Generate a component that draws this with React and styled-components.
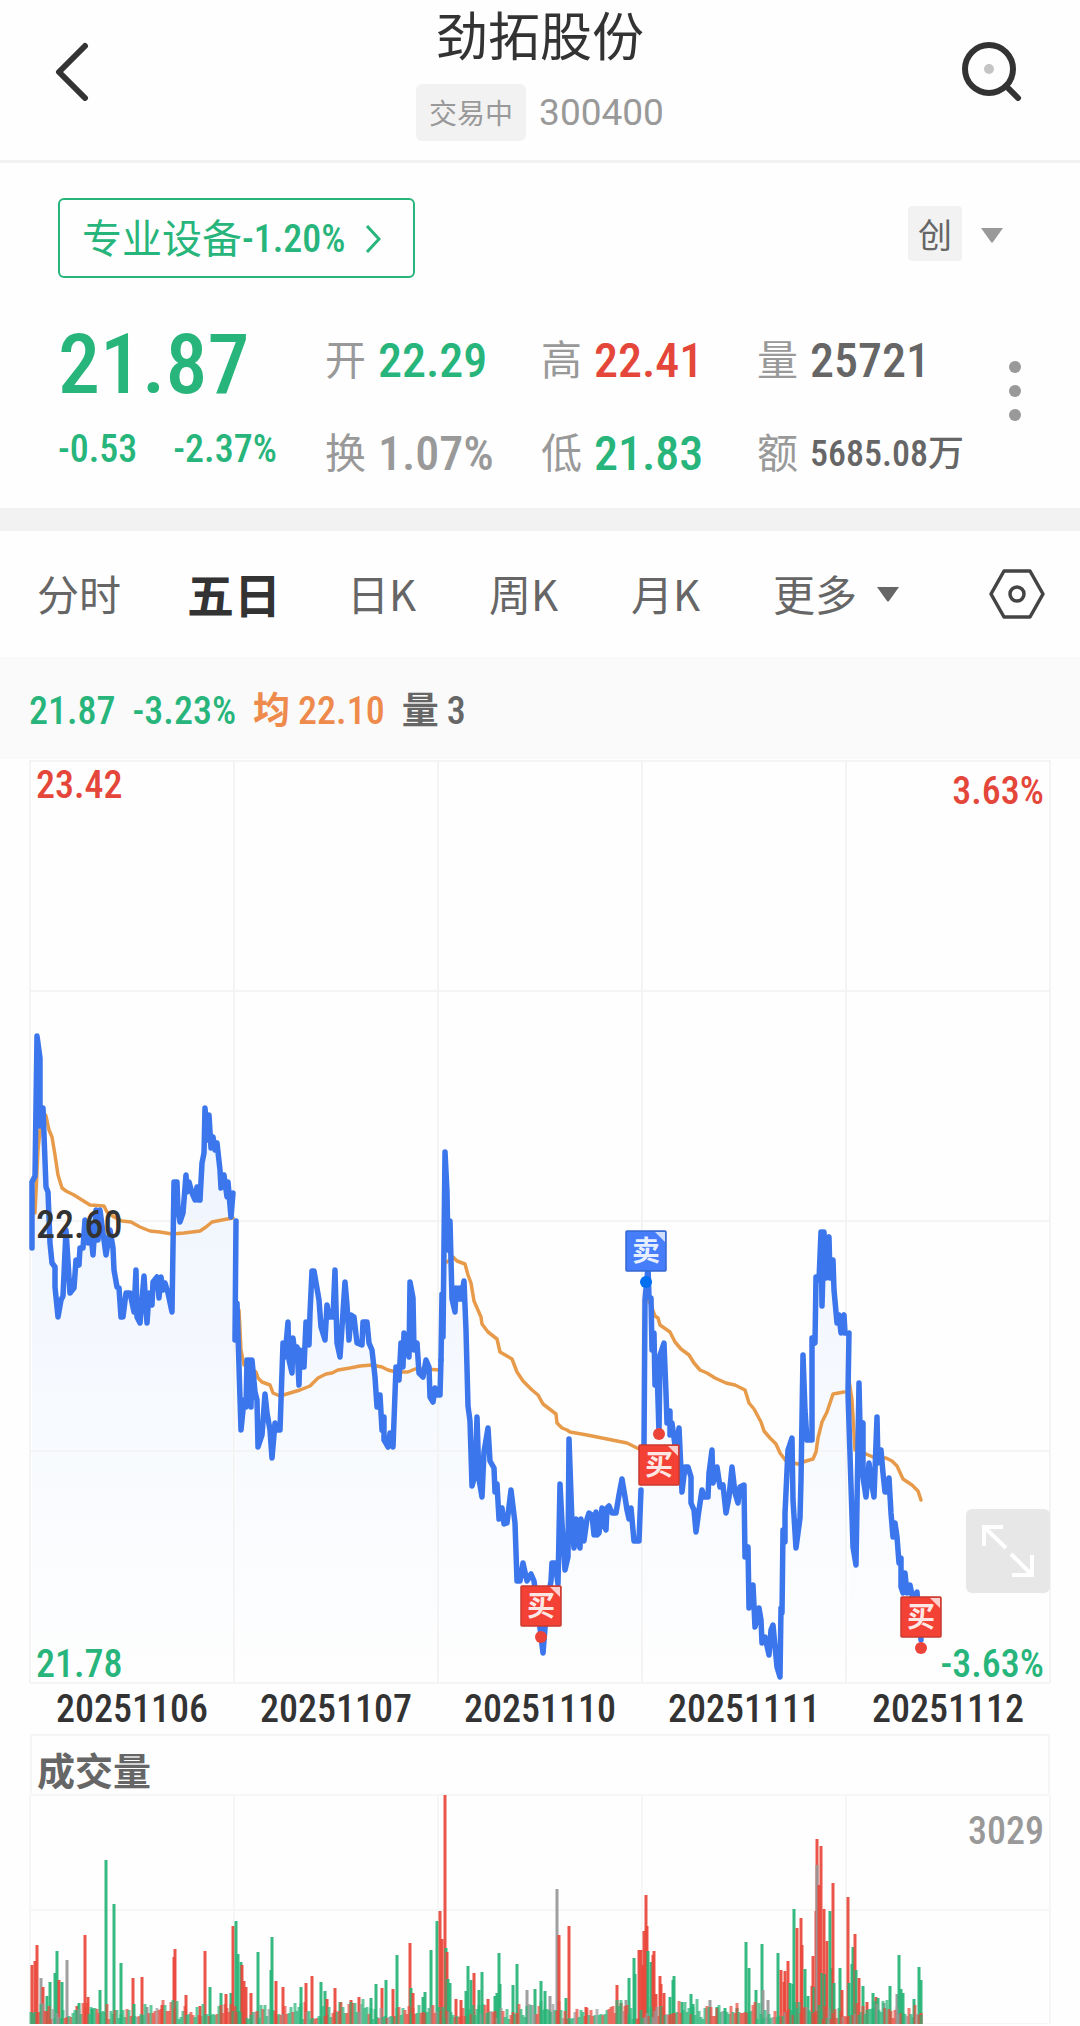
import React from "react";
import styled, { createGlobalStyle } from "styled-components";

const GREEN = "#27b57b";
const RED = "#e4463a";
const ORANGE = "#ee8a4c";
const GREY = "#999999";
const DARK = "#666666";

const GlobalStyle = createGlobalStyle`
  * {
    box-sizing: border-box;
  }
  body {
    margin: 0;
    background-color: #fefefe;
    color: #333333;
    font-family: "Noto Sans CJK SC", "Noto Sans", sans-serif;
  }
  button {
    font: inherit;
    color: inherit;
    background: none;
    border: none;
    padding: 0;
    cursor: pointer;
  }
  svg {
    display: block;
  }
`;

const numberFont = `"Roboto Condensed", Roboto, "Noto Sans CJK SC", sans-serif`;

const Page = styled.div`
  width: 100%;
`;

/* header */

const Header = styled.header`
  display: grid;
  grid-template-columns: 1fr auto 1fr;
  padding: 0 54px 19px;
  border-bottom: 3px solid #f2f2f2;
`;

const IconButton = styled.button`
  display: flex;
  align-items: center;
  justify-self: ${(props) => props.$side || "start"};
`;

const TitleBlock = styled.div`
  display: flex;
  flex-direction: column;
  align-items: center;
`;

const Title = styled.h1`
  margin: 0 0 16px;
  font-size: 52px;
  font-weight: 400;
  line-height: 68px;
`;

const CodeRow = styled.div`
  display: flex;
  align-items: center;
  gap: 13px;
`;

const Tag = styled.span`
  padding: 0 13px;
  font-size: 28px;
  line-height: 57px;
  border-radius: 6px;
  color: ${GREY};
  background-color: #f2f2f2;
`;

const Code = styled.span`
  font-family: Roboto, sans-serif;
  font-size: 37px;
  font-weight: 400;
  color: ${GREY};
`;

/* quote */

const SectorRow = styled.div`
  display: flex;
  justify-content: space-between;
  align-items: flex-start;
  padding: 35px 77px 0 58px;
`;

const SectorLink = styled.a`
  display: flex;
  align-items: center;
  height: 80px;
  padding: 2px 32px 0 22px;
  border: 2px solid ${GREEN};
  border-radius: 6px;
  color: ${GREEN};
  font-size: 40px;
  text-decoration: none;
  svg {
    margin-left: 20px;
  }
`;

const SectorName = styled.span`
  padding-bottom: 6px;
`;

const BoardButton = styled.button`
  display: flex;
  align-items: center;
  gap: 19px;
  margin-top: 8px;
  color: ${GREY};
  span {
    width: 54px;
    font-size: 34px;
    line-height: 55px;
    border-radius: 4px;
    color: ${DARK};
    background-color: #f2f2f2;
  }
  svg {
    margin-top: 4px;
  }
`;

const Quote = styled.section`
  display: grid;
  grid-template-columns: 267px 216px 216px 1fr auto;
  align-items: center;
  padding: 36px 58px 8px;
  border-bottom: 23px solid #f2f2f2;
`;

const QuoteColumn = styled.div`
  display: grid;
  grid-template-rows: 93px 93px;
  align-items: center;
`;

const Num = styled.span`
  font-family: ${numberFont};
  font-size: ${(props) => props.$size || 38}px;
  font-weight: 500;
  line-height: 1;
  color: ${(props) => props.$color || GREEN};
  white-space: nowrap;
`;

const LastPrice = styled(Num)`
  padding-top: 8px;
  font-size: 84px;
`;

const Changes = styled.div`
  display: flex;
  gap: 36px;
  padding-bottom: 10px;
`;

const Stat = styled.div`
  display: flex;
  align-items: center;
  gap: 12px;
`;

const StatLabel = styled.span`
  padding-bottom: 8px;
  font-size: 41px;
  font-weight: 400;
  line-height: 48px;
  color: ${GREY};
`;

const MoreButton = styled.button`
  margin-bottom: 32px;
`;

/* tabs */

const Tabs = styled.nav`
  display: flex;
  align-items: center;
  gap: 66px;
  height: 126px;
  padding: 0 35px 0 37px;
`;

const Tab = styled.button`
  display: flex;
  align-items: center;
  gap: 20px;
  min-width: 76px;
  padding-bottom: 4px;
  font-size: ${(props) => (props.$active ? 47 : 42)}px;
  font-weight: ${(props) => (props.$active ? 700 : 400)};
  color: ${(props) => (props.$active ? "#333333" : DARK)};
  white-space: nowrap;
  svg {
    margin-top: 4px;
  }
`;

const SettingsButton = styled.button`
  margin-left: auto;
`;

const Legend = styled.div`
  display: flex;
  align-items: center;
  height: 102px;
  padding: 6px 29px 0;
  background-color: #fafafa;
`;

const LegendItem = styled.div`
  display: flex;
  align-items: center;
  gap: 8px;
  margin-right: 17px;
  color: ${(props) => props.$color};
`;

const LegendLabel = styled.span`
  padding-bottom: 6px;
  font-size: 37px;
  font-weight: 700;
  line-height: 44px;
`;

/* charts */

const Chart = styled.section`
  position: relative;
  margin: 1px 30px 0;
  > svg {
    width: 100%;
    height: auto;
    overflow: visible;
  }
`;

const AxisLabel = styled(Num)`
  position: absolute;
  ${(props) => props.$at}
`;

const ExpandButton = styled.button`
  position: absolute;
  right: 0;
  bottom: 90px;
  width: 84px;
  height: 84px;
  border-radius: 6px;
  background-color: #e7e7e7;
`;

const Dates = styled.div`
  display: grid;
  grid-template-columns: repeat(5, 1fr);
  height: 51px;
  margin: 0 30px;
  align-items: center;
  text-align: center;
`;

const VolumeHead = styled.h2`
  height: 59px;
  margin: 0 30px;
  padding-left: 5px;
  border: 2px solid #f5f5f5;
  border-bottom: none;
  font-size: 38px;
  font-weight: 700;
  line-height: 66px;
  color: ${DARK};
`;

const dayPrices = [
  "32,1248 32,1182 35,1176 37,1036 40,1058 40,1126 43,1108 46,1187 48,1192 50,1243 52,1263 55,1267 55,1287 58,1317 61,1300 63,1296 66,1230 70,1293 74,1288 76,1260 79,1265 80,1248 83,1248 85,1220 88,1243 90,1225 93,1255 96,1210 98,1240 100,1210 103,1233 106,1255 110,1230 113,1248 114,1270 117,1287 119,1288 121,1317 123,1317 126,1293 130,1293 134,1312 136,1270 137,1317 140,1323 144,1276 147,1323 149,1293 152,1305 153,1282 157,1277 159,1298 161,1277 163,1290 165,1283 168,1293 172,1312 174,1182 177,1182 178,1210 180,1222 183,1213 186,1175 187,1192 189,1182 192,1193 195,1200 197,1187 198,1200 200,1200 202,1163 204,1153 205,1108 207,1140 209,1115 211,1148 213,1137 215,1150 217,1143 220,1170 221,1188 224,1175 227,1197 228,1182 231,1217 233,1193",
  "236,1221 235,1340 237,1303 241,1430 244,1400 246,1407 247,1360 248,1400 250,1360 251,1407 252,1360 255,1392 257,1400 258,1447 262,1435 265,1394 267,1413 270,1430 272,1458 275,1423 277,1430 280,1430 283,1343 285,1357 288,1322 289,1360 292,1373 293,1338 295,1355 297,1347 299,1385 300,1350 302,1367 304,1367 306,1322 309,1345 310,1313 312,1271 314,1271 319,1300 321,1327 325,1340 327,1305 329,1317 333,1317 335,1270 337,1343 340,1357 342,1327 345,1282 347,1305 349,1340 351,1315 354,1317 357,1343 362,1345 363,1322 367,1322 369,1343 372,1350 375,1377 377,1407 380,1395 382,1430 384,1417 384,1440 388,1447 390,1433 393,1447 396,1367 399,1380 401,1343 403,1367 404,1333 407,1350 409,1357 410,1282 413,1298 414,1350 417,1343 419,1373 423,1377 426,1360 429,1367 430,1397 433,1402 435,1388 437,1395 440,1395 441,1360",
  "441,1360 442,1294 443,1337 445,1152 447,1192 448,1250 450,1221 452,1299 455,1312 456,1288 458,1299 459,1288 461,1299 464,1281 466,1330 468,1406 470,1421 472,1486 475,1475 477,1417 479,1479 482,1497 484,1452 488,1428 490,1461 494,1468 495,1492 497,1484 499,1519 502,1508 504,1524 507,1523 511,1490 515,1523 517,1581 520,1581 523,1563 527,1581 531,1574 534,1581 537,1603 540,1628 543,1653 545,1628 547,1603 551,1581 552,1563 555,1563 558,1584 560,1484 562,1523 565,1570 568,1557 569,1439 572,1523 574,1548 576,1519 578,1540 580,1548 581,1519 584,1541 587,1519 589,1513 592,1515 594,1535 596,1512 597,1535 599,1533 602,1508 604,1525 606,1530 607,1508 609,1506 612,1513 616,1513 619,1495 622,1479 625,1497 627,1510 629,1519 631,1508 634,1541 639,1541 641,1490",
  "644,1447 645,1300 648,1267 649,1297 651,1298 652,1350 654,1333 655,1385 657,1367 659,1433 660,1355 664,1343 666,1393 667,1423 670,1411 670,1435 672,1423 676,1453 679,1428 682,1492 685,1467 688,1467 691,1477 691,1503 694,1510 696,1532 699,1510 702,1490 704,1497 708,1497 709,1473 712,1450 713,1483 717,1467 720,1487 723,1485 726,1513 729,1497 732,1467 735,1493 738,1503 740,1487 744,1485 745,1557 748,1547 749,1608 753,1585 755,1627 759,1608 761,1620 762,1643 765,1637 769,1655 771,1630 773,1625 777,1667 780,1677 781,1608 782,1613 783,1530 785,1542 785,1513 788,1450 792,1438 793,1500 796,1548 800,1518 801,1480 803,1355 805,1410 807,1440 812,1440 812,1338 815,1343 816,1277 819,1280 821,1232 822,1306 824,1232 826,1278 827,1240 829,1237 830,1278 833,1260 834,1290 837,1323 839,1315 841,1333 842,1318 844,1315 845,1333",
  "849,1333 848,1393 853,1547 856,1565 859,1383 860,1427 863,1423 863,1477 866,1497 869,1463 871,1480 874,1497 877,1417 878,1463 881,1450 883,1473 885,1492 887,1492 889,1478 891,1513 893,1537 895,1523 897,1537 899,1563 901,1558 901,1587 903,1593 905,1573 907,1593 910,1585 913,1600 917,1592 921,1640",
];

const dayAverages = [
  "35,1213 38,1150 42,1110 46,1116 49,1130 52,1137 55,1155 58,1175 62,1188 66,1191 74,1195 82,1200 90,1205 104,1206 107,1212 114,1217 122,1221 131,1222 140,1227 150,1231 160,1232 172,1234 184,1233 200,1231 206,1227 212,1222 222,1220 233,1218",
  "239,1310 241,1350 244,1365 250,1368 256,1372 258,1378 262,1382 270,1385 273,1393 280,1396 290,1393 300,1390 310,1386 318,1378 326,1374 332,1373 338,1370 350,1368 360,1366 372,1365 382,1367 388,1370 396,1372 408,1372 415,1369 425,1369 440,1370",
  "447,1262 453,1257 457,1261 465,1264 468,1275 471,1283 474,1301 481,1317 482,1324 488,1332 497,1339 500,1352 512,1359 517,1372 523,1381 532,1390 538,1395 543,1404 556,1414 557,1423 562,1428 567,1430 570,1432 587,1435 607,1439 627,1443 637,1448 642,1450",
  "648,1300 651,1305 655,1316 658,1318 660,1325 670,1332 675,1342 681,1349 689,1355 694,1363 700,1370 707,1373 715,1378 726,1383 735,1385 745,1390 749,1403 754,1409 761,1422 764,1431 770,1438 776,1444 780,1453 786,1461 798,1464 806,1461 813,1459 816,1452 818,1438 822,1422 827,1412 833,1394 844,1392",
  "849,1380 852,1400 855,1450 866,1454 873,1457 886,1458 892,1461 897,1466 903,1479 912,1485 918,1491 921,1500",
];

const trades = [
  { kind: "卖", x: 625, y: 1230, dotX: 646, dotY: 1282 },
  { kind: "买", x: 638, y: 1444, dotX: 659, dotY: 1434 },
  { kind: "买", x: 520, y: 1585, dotX: 541, dotY: 1637 },
  { kind: "买", x: 900, y: 1596, dotX: 921, dotY: 1648 },
];

// x, height, direction (r = up, g = down, n = flat)
const volumes =
  "32 59r,35 63r,37 79r,41 46n,43 37r,47 28g,50 42g,55 51g,57 73g,59 44r,62 42g,67 64n,77 18r,79 21g,85 89r,88 27r,92 15g,100 34g,106 164g,114 120g,121 61g,133 46r,134 20g,142 47r,147 17n,162 19r,174 67r,175 75r,186 29r,200 18r,205 73r,210 37g,221 31g,226 30r,231 31g,233 98r,236 103g,238 70g,241 62g,242 59r,244 43r,246 37r,251 31r,258 72g,271 54g,272 87g,276 43r,283 37r,301 37g,306 41r,312 48r,321 42g,325 33g,327 25r,335 36r,340 22g,351 24r,359 27r,371 26g,376 40g,382 36r,386 44g,393 35r,397 69g,410 81r,411 36g,413 31r,423 27g,425 32g,431 74g,437 103g,440 113r,442 85r,445 229r,446 76g,447 72r,448 45g,450 41g,456 25r,461 24r,466 33g,468 58g,471 44g,474 51r,479 34g,482 52g,488 25r,495 28g,497 31g,499 71g,500 40g,513 39g,517 60g,527 34n,535 35g,541 43g,545 33g,550 28n,557 135n,559 89r,566 26g,569 98r,586 17r,617 39r,621 21r,626 24n,629 46g,634 66g,635 50g,639 74r,641 74r,643 59r,644 93r,646 129r,647 98r,648 73g,651 62g,653 69r,654 73r,656 30r,660 48r,661 40r,664 31r,670 27g,673 44g,674 48g,682 22g,691 30g,693 20g,710 24n,717 17g,725 16g,737 16g,746 82g,749 56g,756 34g,762 80g,763 34n,768 24n,778 71g,781 54r,784 42r,785 53r,788 63r,790 41g,793 40g,794 115g,797 96r,801 106r,802 79r,805 55g,808 28g,812 38r,813 68r,814 37g,816 113r,817 185r,817 159n,819 139r,821 178r,822 51g,824 115r,825 50g,827 83r,830 113g,832 56g,833 141r,834 41g,840 56g,842 34r,848 127r,849 41g,852 60g,853 77g,855 90r,856 54g,859 46r,863 38g,867 22r,873 31g,876 27r,878 26g,884 21n,890 38g,897 30n,899 69g,901 35g,903 31g,914 25g,919 57g,921 44g,921 11r"
    .split(",")
    .map((item) => {
      const [x, rest] = item.split(" ");
      return { x: Number(x), h: parseInt(rest, 10), dir: rest.slice(-1) };
    });

// low turnover minutes between the peaks
const quiet = [];
for (let i = 0; i < 446; i++) {
  const a = (i * 7919 + 104) % 97;
  const b = (i * i * 31 + i * 17) % 89;
  quiet.push({
    x: 31 + i * 2,
    h: 5 + (a % 9) + (b % 13) * (b % 3 === 0 ? 0 : 1),
    dir: "grgrgnrgr"[(a + b) % 9],
  });
}

const barColors = { r: "#ea473a", g: "#27b577", n: "#999999" };

function Triangle() {
  return (
    <svg width="22" height="15" viewBox="0 0 22 15">
      <path d="M0 0h22L12 14q-1 1-2 0z" fill="currentColor" />
    </svg>
  );
}

function TradeMark({ kind, x, y, dotX, dotY }) {
  const sell = kind === "卖";
  return (
    <g>
      <circle cx={dotX} cy={dotY} r="6" fill={sell ? "#0070f0" : "#ec4339"} />
      <rect
        x={x + 1}
        y={y + 1}
        width="40"
        height="40"
        rx="1"
        fill={sell ? "#457dfb" : "#f34235"}
        stroke={sell ? "#3567cf" : "#c93a30"}
        strokeWidth="1.5"
      />
      <path d={`M${x + 30} ${y + 2}h10v10z`} fill="#ffffff" opacity="0.75" />
      <text
        x={x + 21}
        y={y + 31}
        textAnchor="middle"
        fontSize="28"
        fontWeight="700"
        fill="#ffffff"
        fillOpacity="0.9"
      >
        {kind}
      </text>
    </g>
  );
}

function PriceChart() {
  return (
    <svg viewBox="30 760 1020 923" role="img" aria-label="五日">
      <defs>
        <linearGradient
          id="area"
          gradientUnits="userSpaceOnUse"
          x1="0"
          y1="1030"
          x2="0"
          y2="1683"
        >
          <stop offset="0" stopColor="#ecf3fe" />
          <stop offset="1" stopColor="#fefefe" />
        </linearGradient>
      </defs>
      {dayPrices.map((points) => (
        <polygon
          key={points}
          points={`${points.split(",")[0]},1683 ${points} ${
            points.split(" ").pop().split(",")[0]
          },1683`}
          fill="url(#area)"
        />
      ))}
      <g stroke="#f4f4f5" strokeWidth="2">
        {[30, 234, 438, 642, 846, 1050].map((x) => (
          <line key={x} x1={x} x2={x} y1="760" y2="1683" />
        ))}
        {[761, 991, 1221, 1451, 1683].map((y) => (
          <line key={y} x1="30" x2="1050" y1={y} y2={y} />
        ))}
      </g>
      <g fill="none" strokeLinejoin="round" strokeLinecap="round">
        {dayAverages.map((points) => (
          <polyline key={points} points={points} stroke="#e79b4a" strokeWidth="3.5" />
        ))}
        {dayPrices.map((points) => (
          <polyline key={points} points={points} stroke="#3b76ec" strokeWidth="5.5" />
        ))}
      </g>
      {trades.map((trade) => (
        <TradeMark key={trade.x} {...trade} />
      ))}
    </svg>
  );
}

function VolumeChart() {
  return (
    <svg viewBox="30 0 1020 230" role="img" aria-label="成交量">
      <g stroke="#f6f6f6" strokeWidth="2">
        {[30, 234, 438, 642, 846, 1050].map((x) => (
          <line key={x} x1={x} x2={x} y1="0" y2="230" />
        ))}
        {[1, 116, 230].map((y) => (
          <line key={y} x1="30" x2="1050" y1={y} y2={y} />
        ))}
      </g>
      <g strokeWidth="3">
        {volumes.map(({ x, h, dir }, i) => (
          <line key={i} x1={x} x2={x} y1="230" y2={230 - h} stroke={barColors[dir]} opacity="0.92" />
        ))}
        {quiet.map(({ x, h, dir }, i) => (
          <line key={i} x1={x} x2={x} y1="230" y2={230 - h} stroke={barColors[dir]} opacity="0.7" />
        ))}
      </g>
    </svg>
  );
}

function App() {
  return (
    <Page>
      <GlobalStyle />
      <Header>
        <IconButton aria-label="返回">
          <svg width="36" height="60" viewBox="0 0 36 60" fill="none" stroke="#333333" strokeWidth="6" strokeLinecap="round" strokeLinejoin="round">
            <path d="M31 5 5 31l26 26" />
          </svg>
        </IconButton>
        <TitleBlock>
          <Title>劲拓股份</Title>
          <CodeRow>
            <Tag>交易中</Tag>
            <Code>300400</Code>
          </CodeRow>
        </TitleBlock>
        <IconButton $side="end" aria-label="搜索">
          <svg width="64" height="60" viewBox="0 0 64 60" fill="none" stroke="#333333" strokeWidth="6">
            <circle cx="27" cy="28" r="24" />
            <path d="M44 45 56 57" strokeLinecap="round" />
            <circle cx="27" cy="28" r="5" fill="#c4c4c4" stroke="none" />
          </svg>
        </IconButton>
      </Header>

      <SectorRow>
        <SectorLink href="#sector">
          <SectorName>专业设备</SectorName>
          <Num>-1.20%</Num>
          <svg width="16" height="28" viewBox="0 0 16 28" fill="none" stroke="currentColor" strokeWidth="3">
            <path d="M2 1 14 14 2 27" />
          </svg>
        </SectorLink>
        <BoardButton>
          <span>创</span>
          <Triangle />
        </BoardButton>
      </SectorRow>

      <Quote>
        <QuoteColumn>
          <LastPrice>21.87</LastPrice>
          <Changes>
            <Num>-0.53</Num>
            <Num>-2.37%</Num>
          </Changes>
        </QuoteColumn>
        <QuoteColumn>
          <Stat>
            <StatLabel>开</StatLabel>
            <Num $size={48}>22.29</Num>
          </Stat>
          <Stat>
            <StatLabel>换</StatLabel>
            <Num $size={48} $color={GREY}>1.07%</Num>
          </Stat>
        </QuoteColumn>
        <QuoteColumn>
          <Stat>
            <StatLabel>高</StatLabel>
            <Num $size={48} $color={RED}>22.41</Num>
          </Stat>
          <Stat>
            <StatLabel>低</StatLabel>
            <Num $size={48}>21.83</Num>
          </Stat>
        </QuoteColumn>
        <QuoteColumn>
          <Stat>
            <StatLabel>量</StatLabel>
            <Num $size={48} $color={DARK}>25721</Num>
          </Stat>
          <Stat>
            <StatLabel>额</StatLabel>
            <Num $size={36} $color={DARK}>5685.08万</Num>
          </Stat>
        </QuoteColumn>
        <MoreButton aria-label="更多行情">
          <svg width="14" height="62" viewBox="0 0 14 62" fill={GREY}>
            <circle cx="7" cy="7" r="6" />
            <circle cx="7" cy="31" r="6" />
            <circle cx="7" cy="55" r="6" />
          </svg>
        </MoreButton>
      </Quote>

      <Tabs>
        <Tab>分时</Tab>
        <Tab $active>五日</Tab>
        <Tab>日K</Tab>
        <Tab>周K</Tab>
        <Tab>月K</Tab>
        <Tab>
          更多
          <Triangle />
        </Tab>
        <SettingsButton aria-label="设置">
          <svg width="56" height="50" viewBox="0 0 56 50" fill="none" stroke="#444444" strokeWidth="3.5" strokeLinejoin="round">
            <path d="M15 2h26l13 23-13 23H15L2 25z" />
            <circle cx="28" cy="25" r="7" />
          </svg>
        </SettingsButton>
      </Tabs>

      <Legend>
        <LegendItem>
          <Num>21.87</Num>
        </LegendItem>
        <LegendItem>
          <Num>-3.23%</Num>
        </LegendItem>
        <LegendItem $color={ORANGE}>
          <LegendLabel>均</LegendLabel>
          <Num $color={ORANGE}>22.10</Num>
        </LegendItem>
        <LegendItem $color={DARK}>
          <LegendLabel>量</LegendLabel>
          <Num $color={DARK}>3</Num>
        </LegendItem>
      </Legend>

      <Chart>
        <PriceChart />
        <AxisLabel $color={RED} $at="top: 6px; left: 6px;">23.42</AxisLabel>
        <AxisLabel $color={RED} $at="top: 12px; right: 6px;">3.63%</AxisLabel>
        <AxisLabel $color="#333333" $at="top: 50%; left: 6px; margin-top: -16px;">22.60</AxisLabel>
        <AxisLabel $at="bottom: 0; left: 6px;">21.78</AxisLabel>
        <AxisLabel $at="bottom: 0; right: 6px;">-3.63%</AxisLabel>
        <ExpandButton aria-label="全屏">
          <svg width="84" height="84" viewBox="0 0 84 84" fill="none" stroke="#ffffff" strokeWidth="4">
            <path d="M37 18H18v19M18 18l22 21M66 46v20H46M66 66 45 45" />
          </svg>
        </ExpandButton>
      </Chart>
      <Dates>
        {["20251106", "20251107", "20251110", "20251111", "20251112"].map((date) => (
          <Num key={date} $color="#333333">{date}</Num>
        ))}
      </Dates>

      <VolumeHead>成交量</VolumeHead>
      <Chart>
        <VolumeChart />
        <AxisLabel $color={GREY} $at="top: 18px; right: 6px;">3029</AxisLabel>
      </Chart>
    </Page>
  );
}

export default App;
